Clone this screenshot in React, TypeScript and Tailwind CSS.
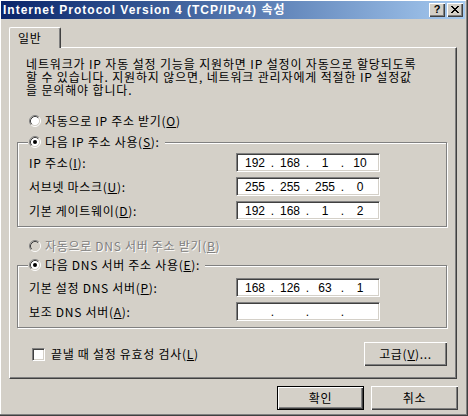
import React from "react";

const ipRows = [
  { label: "IP 주소", key: "I", parts: ["192", "168", "1", "10"] },
  { label: "서브넷 마스크", key: "U", parts: ["255", "255", "255", "0"] },
  { label: "기본 게이트웨이", key: "D", parts: ["192", "168", "1", "2"] },
];

const dnsRows = [
  { label: "기본 설정 DNS 서버", key: "P", parts: ["168", "126", "63", "1"] },
  { label: "보조 DNS 서버", key: "A", parts: ["", "", "", ""] },
];

const intro = [
  "네트워크가 IP 자동 설정 기능을 지원하면 IP 설정이 자동으로 할당되도록",
  "할 수 있습니다. 지원하지 않으면, 네트워크 관리자에게 적절한 IP 설정값",
  "을 문의해야 합니다.",
];

function Radio({ checked = false, disabled = false }: { checked?: boolean; disabled?: boolean }) {
  return (
    <svg width="12" height="12" viewBox="0 0 12 12" className="shrink-0">
      <circle cx="6" cy="6" r="4.5" fill={disabled ? "#d4d0c8" : "#ffffff"} />
      <path d="M2.11 9.89A5.5 5.5 0 0 1 9.89 2.11" fill="none" stroke="#808080" />
      <path d="M9.89 2.11A5.5 5.5 0 0 1 2.11 9.89" fill="none" stroke="#ffffff" />
      <path d="M2.82 9.18A4.5 4.5 0 0 1 9.18 2.82" fill="none" stroke="#404040" />
      <path d="M9.18 2.82A4.5 4.5 0 0 1 2.82 9.18" fill="none" stroke="#d4d0c8" />
      {checked && <circle cx="6" cy="6" r="2" fill="#000000" />}
    </svg>
  );
}

function IpField({ parts }: { parts: string[] }) {
  return (
    <div className="flex items-center w-[144px] h-[19px] pl-[3px] bg-white border border-t-[#808080] border-l-[#808080] border-b-white border-r-white shadow-[inset_1px_1px_0_#404040,inset_-1px_-1px_0_#d4d0c8] font-['Liberation_Sans',sans-serif] text-[12px] leading-none tracking-normal text-black">
      {parts.map((p, i) => (
        <div key={i} className="flex">
          <span className="w-[30px] text-center">{p}</span>
          {i < 3 && <span className="w-[5px] text-center">.</span>}
        </div>
      ))}
    </div>
  );
}

function FieldRow({ label, k, parts }: { label: string; k: string; parts: string[] }) {
  return (
    <div className="flex items-center h-[19px]">
      <span className="w-[207px] whitespace-nowrap">
        {label}(<u>{k}</u>):
      </span>
      <IpField parts={parts} />
    </div>
  );
}

function GroupBox({ legend, children, className = "" }: { legend: React.ReactNode; children: React.ReactNode; className?: string }) {
  return (
    <div className={`relative border border-[#808080] shadow-[inset_1px_1px_0_#ffffff,1px_1px_0_#ffffff] ${className}`}>
      <div className="absolute -top-[8px] left-[10px] flex items-center gap-[4px] h-[14px] pl-px pr-[5px] bg-[#d4d0c8]">
        {legend}
      </div>
      {children}
    </div>
  );
}

export default function App() {
  return (
    <div className="w-[468px] h-[416px] bg-[#404040] pr-px pb-px font-['Noto_Sans_CJK_KR','Noto_Sans_CJK_SC',sans-serif] text-[12px] leading-[12px] tracking-[0.7px] text-black">
      <div className="w-full h-full bg-[#808080] pr-px pb-px">
        <div className="flex flex-col w-full h-full bg-[#d4d0c8] border-t border-l border-white pr-px">
          {/* Title bar */}
          <div className="flex items-center h-[18px] pl-[2px] pr-[2px] bg-linear-to-r from-[#0a246a] to-[#a6caf0]">
            <span className="flex-1 whitespace-nowrap text-white font-bold tracking-[1px] font-['Liberation_Sans','Noto_Sans_CJK_KR',sans-serif]">
              Internet Protocol Version 4 (TCP/IPv4) 속성
            </span>
            <div className="flex gap-[2px]">
              <div className="flex items-center justify-center w-[16px] h-[14px] bg-[#d4d0c8] shadow-[inset_1px_1px_0_#ffffff,inset_-1px_-1px_0_#404040,inset_-2px_-2px_0_#808080] font-['Liberation_Sans',sans-serif] font-bold text-[11px] leading-none tracking-normal pb-px">
                ?
              </div>
              <div className="flex items-center justify-center w-[16px] h-[14px] bg-[#d4d0c8] shadow-[inset_1px_1px_0_#ffffff,inset_-1px_-1px_0_#404040,inset_-2px_-2px_0_#808080] pb-px pr-px">
                <svg width="8" height="7" viewBox="0 0 8 7" shapeRendering="crispEdges">
                  <path
                    d="M0 0h2v1H0z M6 0h2v1H6z M1 1h2v1H1z M5 1h2v1H5z M2 2h4v1H2z M3 3h2v1H3z M2 4h4v1H2z M1 5h2v1H1z M5 5h2v1H5z M0 6h2v1H0z M6 6h2v1H6z"
                    fill="#000000"
                  />
                </svg>
              </div>
            </div>
          </div>

          {/* Body */}
          <div className="flex flex-col pl-[8px] pr-[8px]">
            <div className="relative z-10 -mb-px mt-[8px] flex items-center h-[21px] w-[52px] pl-[8px] bg-[#d4d0c8] border-t border-l border-white border-r border-r-[#404040] rounded-t-[2px] shadow-[inset_-1px_0_0_#808080]">
              일반
            </div>

            <div className="flex flex-col h-[332px] pl-[7px] pr-[9px] border border-t-white border-l-white border-r-[#404040] border-b-[#404040] shadow-[inset_-1px_-1px_0_#808080]">
              <div className="flex flex-col ml-[9px] mt-[9px] tracking-[0.85px]">
                {intro.map((line) => (
                  <div key={line} className="h-[13px] leading-[13px] whitespace-nowrap">
                    {line}
                  </div>
                ))}
              </div>

              <div className="flex items-center gap-[4px] h-[14px] mt-[18px] ml-[12px]">
                <Radio />
                <span>
                  자동으로 IP 주소 받기(<u>O</u>)
                </span>
              </div>

              <GroupBox
                className="mt-[14px]"
                legend={
                  <>
                    <Radio checked />
                    <span className="whitespace-nowrap">
                      다음 IP 주소 사용(<u>S</u>):
                    </span>
                  </>
                }
              >
                <div className="flex flex-col gap-[5px] pt-[10px] pb-[6px] pl-[11px]">
                  {ipRows.map((r) => (
                    <FieldRow key={r.key} label={r.label} k={r.key} parts={r.parts} />
                  ))}
                </div>
              </GroupBox>

              <div className="flex items-center gap-[4px] h-[14px] mt-[12px] ml-[12px]">
                <Radio disabled />
                <span className="text-[#808080] [text-shadow:1px_1px_0_#ffffff]">
                  자동으로 DNS 서버 주소 받기(<u>B</u>)
                </span>
              </div>

              <GroupBox
                className="mt-[12px]"
                legend={
                  <>
                    <Radio checked />
                    <span className="whitespace-nowrap">
                      다음 DNS 서버 주소 사용(<u>E</u>):
                    </span>
                  </>
                }
              >
                <div className="flex flex-col gap-[5px] pt-[12px] pb-[6px] pl-[11px]">
                  {dnsRows.map((r) => (
                    <FieldRow key={r.key} label={r.label} k={r.key} parts={r.parts} />
                  ))}
                </div>
              </GroupBox>

              <div className="flex items-center justify-between h-[24px] mt-[14px]">
                <div className="flex items-center gap-[6px] ml-[15px]">
                  <span className="block w-[13px] h-[13px] bg-white border border-t-[#808080] border-l-[#808080] border-b-white border-r-white shadow-[inset_1px_1px_0_#404040,inset_-1px_-1px_0_#d4d0c8]" />
                  <span>
                    끝낼 때 설정 유효성 검사(<u>L</u>)
                  </span>
                </div>
                <button className="flex items-center justify-center w-[83px] h-[24px] bg-[#d4d0c8] shadow-[inset_1px_1px_0_#ffffff,inset_-1px_-1px_0_#404040,inset_-2px_-2px_0_#808080]">
                  고급(<u>V</u>)...
                </button>
              </div>
            </div>

            {/* Dialog buttons */}
            <div className="flex justify-end gap-[7px] mt-[7px] -mr-px">
              <button className="flex items-center justify-center w-[87px] h-[24px] bg-[#d4d0c8] border border-black shadow-[inset_1px_1px_0_#ffffff,inset_-1px_-1px_0_#404040,inset_-2px_-2px_0_#808080]">
                확인
              </button>
              <button className="flex items-center justify-center w-[87px] h-[24px] bg-[#d4d0c8] shadow-[inset_1px_1px_0_#ffffff,inset_-1px_-1px_0_#404040,inset_-2px_-2px_0_#808080]">
                취소
              </button>
            </div>
          </div>
        </div>
      </div>
    </div>
  );
}
